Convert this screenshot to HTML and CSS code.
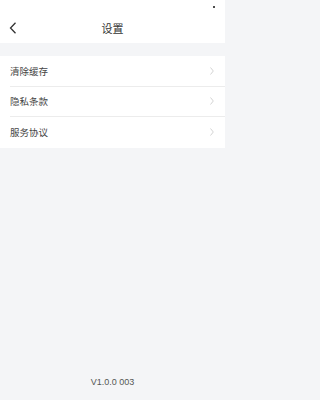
FILE: index.html
```html
<!DOCTYPE html>
<html lang="zh">
<head>
<meta charset="utf-8">
<link rel="stylesheet" href="styles.css">
</head>
<body>
<div class="page">
  <div class="status"><span class="dot"></span></div>
  <header class="nav">
    <span class="back">
      <svg width="8" height="12" viewBox="0 0 8 12"><path d="M6.5 0.8 L1.5 6 L6.5 11.2" fill="none" stroke="#333" stroke-width="1.3"/></svg>
    </span>
    <h1 class="title">设置</h1>
  </header>
  <div class="gap"></div>
  <ul class="list">
    <li class="item"><span>清除缓存</span><svg class="chev" width="4" height="8" viewBox="0 0 4 8"><path d="M0.5 0.5 L3.3 4 L0.5 7.5" fill="none" stroke="#c8c8c8" stroke-width="0.8"/></svg></li>
    <li class="item"><span>隐私条款</span><svg class="chev" width="4" height="8" viewBox="0 0 4 8"><path d="M0.5 0.5 L3.3 4 L0.5 7.5" fill="none" stroke="#c8c8c8" stroke-width="0.8"/></svg></li>
    <li class="item"><span>服务协议</span><svg class="chev" width="4" height="8" viewBox="0 0 4 8"><path d="M0.5 0.5 L3.3 4 L0.5 7.5" fill="none" stroke="#c8c8c8" stroke-width="0.8"/></svg></li>
  </ul>
  <div class="spacer"></div>
  <footer class="version">V1.0.0 003</footer>
</div>
</body>
</html>
```
FILE: styles.css
```css
* { box-sizing: border-box; }
html, body { margin: 0; padding: 0; }
body {
  font-family: "Noto Sans CJK SC", "Liberation Sans", sans-serif;
  background: #f4f5f7;
  color: #333;
}
.page {
  width: 225px;
  height: 400px;
  display: flex;
  flex-direction: column;
}
.status {
  height: 14px;
  background: #fff;
  display: flex;
  justify-content: flex-end;
  align-items: center;
  padding-right: 10px;
}
.dot {
  width: 2px;
  height: 2px;
  border-radius: 1px;
  background: #111;
  margin-top: -1px;
}
.nav {
  height: 29px;
  background: #fff;
  display: flex;
  align-items: center;
  justify-content: center;
  position: relative;
}
.back {
  position: absolute;
  left: 9px;
  top: 8px;
  display: flex;
}
.title {
  margin: 0;
  font-size: 11px;
  font-weight: normal;
  color: #333;
  margin-top: -1px;
}
.gap { height: 13px; }
.list {
  list-style: none;
  margin: 0;
  padding: 0 0 0 10px;
  background: #fff;
}
.item {
  height: 30.5px;
  display: flex;
  align-items: center;
  justify-content: space-between;
  padding-right: 11px;
  font-size: 9.5px;
  color: #444;
  border-bottom: 1px solid #ececec;
}
.item:last-child { border-bottom: none; }
.spacer { flex: 1; }
.version {
  font-family: "Liberation Sans", sans-serif;
  text-align: center;
  font-size: 9px;
  color: #555;
  padding-bottom: 13px;
}
```
